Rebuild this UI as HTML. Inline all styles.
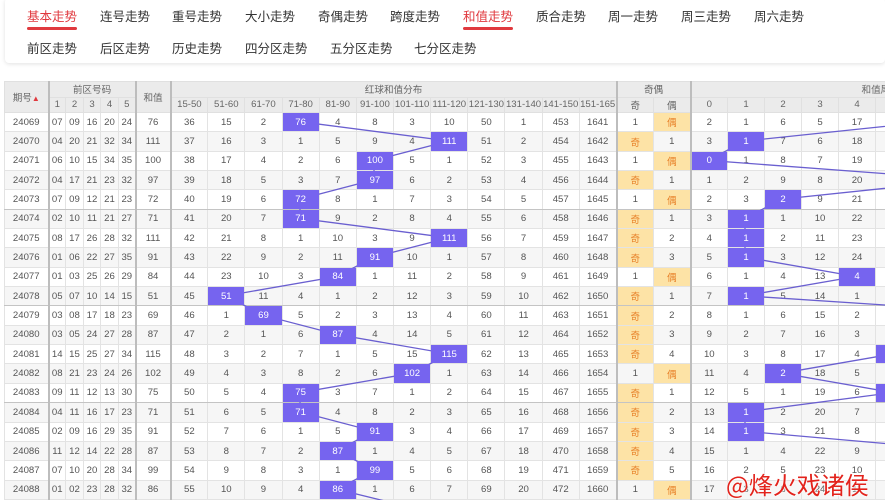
<!DOCTYPE html>
<html><head><meta charset="utf-8"><style>
*{margin:0;padding:0;box-sizing:border-box}
body{width:885px;height:500px;overflow:hidden;background:#fff;font-family:"Liberation Sans","Noto Sans CJK SC",sans-serif;position:relative}
.nav{position:absolute;left:5px;top:-2px;width:880px;height:65px;background:#fff;border-radius:4px;box-shadow:0 1px 4px rgba(0,0,0,.12);overflow:hidden}
.nav span{position:absolute;font-size:12.5px;color:#333;white-space:nowrap}
.nav span.a{color:#e0393e}
.nav span.a:after{content:"";position:absolute;left:0;right:0;bottom:-5px;height:3px;background:#e0393e;border-radius:2px}
.wrap{position:absolute;left:4px;top:81px;width:881px;height:419px;overflow:hidden}
table{border-collapse:collapse;table-layout:fixed;font-size:9.6px;color:#555;width:1052px}
td,th{text-align:center;border:1px solid #e3e3e3;white-space:nowrap;overflow:hidden;padding:0;font-weight:normal}
th{background:#ebebeb;color:#666;height:15.5px;border-color:#e0e0e0}
tr.r td{height:19.35px}
tr.g td{background:#f6f6f6}
tr.sep td{border-bottom:1px solid #c4c4c4}
.s{border-left:2px solid #bdbdbd!important}
td.h{background:#7664ef!important;color:#fff;position:relative;z-index:2}
td.o{background:#fde3a6!important;color:#e8822a}
svg{position:absolute;left:-4px;top:-81px;z-index:1}
.wm{position:absolute;left:726px;top:470px;font-size:24px;color:#e3231c;font-family:"Noto Sans CJK SC",sans-serif;text-shadow:0 0 2px #fff,0 0 2px #fff;white-space:nowrap;line-height:28px;z-index:3}
</style></head><body>
<div class="nav">
<span class="a" style="left:22px;top:8px">基本走势</span>
<span style="left:95px;top:8px">连号走势</span>
<span style="left:167px;top:8px">重号走势</span>
<span style="left:240px;top:8px">大小走势</span>
<span style="left:313px;top:8px">奇偶走势</span>
<span style="left:385px;top:8px">跨度走势</span>
<span class="a" style="left:458px;top:8px">和值走势</span>
<span style="left:531px;top:8px">质合走势</span>
<span style="left:603px;top:8px">周一走势</span>
<span style="left:676px;top:8px">周三走势</span>
<span style="left:749px;top:8px">周六走势</span>
<span style="left:22px;top:40px">前区走势</span>
<span style="left:95px;top:40px">后区走势</span>
<span style="left:167px;top:40px">历史走势</span>
<span style="left:240px;top:40px">四分区走势</span>
<span style="left:325px;top:40px">五分区走势</span>
<span style="left:409px;top:40px">七分区走势</span>
</div>
<div class="wrap">
<svg width="885" height="500" viewBox="0 0 885 500">
<polyline fill="none" stroke="#6a5fd0" stroke-width="1.3" points="300,121.7 449,141 374,160.4 374,179.7 300,199.1 300,218.4 449,237.8 374,257.1 337,276.5 226,295.8 263,315.2 337,334.5 449,353.9 412,373.2 300,392.6 300,411.9 374,431.3 337,450.6 374,470 337,489.3 430,512"/>
<polyline fill="none" stroke="#6a5fd0" stroke-width="1.3" points="930,121.7 745,141 708,160.4 967,179.7 782,199.1 745,218.4 745,237.8 745,257.1 856,276.5 745,295.8 1041,315.2 967,334.5 893,353.9 782,373.2 893,392.6 745,411.9 745,431.3 967,450.6 1041,470 930,489.3"/>
</svg>
<table>
<colgroup><col style="width:44px"><col style="width:17px"><col style="width:18px"><col style="width:17px"><col style="width:18px"><col style="width:17px"><col style="width:35px">
<col style="width:37.17px"><col style="width:37.17px"><col style="width:37.17px"><col style="width:37.17px"><col style="width:37.17px"><col style="width:37.17px"><col style="width:37.17px"><col style="width:37.17px"><col style="width:37.17px"><col style="width:37.17px"><col style="width:37.17px"><col style="width:37.17px">
<col style="width:37px"><col style="width:37px">
<col style="width:37px"><col style="width:37px"><col style="width:37px"><col style="width:37px"><col style="width:37px"><col style="width:37px"><col style="width:37px"><col style="width:37px"><col style="width:37px"><col style="width:37px"></colgroup>
<tr><th rowspan="2">期号<span style="color:#e0393e;font-size:8px">▲</span></th><th colspan="5" class="s">前区号码</th><th rowspan="2" class="s">和值</th><th colspan="12" class="s">红球和值分布</th><th colspan="2" class="s">奇偶</th><th colspan="10" class="s">和值尾</th></tr>
<tr><th class="s">1</th><th>2</th><th>3</th><th>4</th><th>5</th><th class="s">15-50</th><th>51-60</th><th>61-70</th><th>71-80</th><th>81-90</th><th>91-100</th><th>101-110</th><th>111-120</th><th>121-130</th><th>131-140</th><th>141-150</th><th>151-165</th><th class="s">奇</th><th>偶</th><th class="s">0</th><th>1</th><th>2</th><th>3</th><th>4</th><th>5</th><th>6</th><th>7</th><th>8</th><th>9</th></tr>
<tr class="r"><td>24069</td><td class="s">07</td><td>09</td><td>16</td><td>20</td><td>24</td><td class="s">76</td><td class="s">36</td><td>15</td><td>2</td><td class="h">76</td><td>4</td><td>8</td><td>3</td><td>10</td><td>50</td><td>1</td><td>453</td><td>1641</td><td class="s">1</td><td class="o">偶</td><td class="s">2</td><td>1</td><td>6</td><td>5</td><td>17</td><td>18</td><td class="h">6</td><td></td><td></td><td></td></tr>
<tr class="r g"><td>24070</td><td class="s">04</td><td>20</td><td>21</td><td>32</td><td>34</td><td class="s">111</td><td class="s">37</td><td>16</td><td>3</td><td>1</td><td>5</td><td>9</td><td>4</td><td class="h">111</td><td>51</td><td>2</td><td>454</td><td>1642</td><td class="s o">奇</td><td>1</td><td class="s">3</td><td class="h">1</td><td>7</td><td>6</td><td>18</td><td>19</td><td>1</td><td></td><td></td><td></td></tr>
<tr class="r"><td>24071</td><td class="s">06</td><td>10</td><td>15</td><td>34</td><td>35</td><td class="s">100</td><td class="s">38</td><td>17</td><td>4</td><td>2</td><td>6</td><td class="h">100</td><td>5</td><td>1</td><td>52</td><td>3</td><td>455</td><td>1643</td><td class="s">1</td><td class="o">偶</td><td class="s h">0</td><td>1</td><td>8</td><td>7</td><td>19</td><td>20</td><td>2</td><td></td><td></td><td></td></tr>
<tr class="r g"><td>24072</td><td class="s">04</td><td>17</td><td>21</td><td>23</td><td>32</td><td class="s">97</td><td class="s">39</td><td>18</td><td>5</td><td>3</td><td>7</td><td class="h">97</td><td>6</td><td>2</td><td>53</td><td>4</td><td>456</td><td>1644</td><td class="s o">奇</td><td>1</td><td class="s">1</td><td>2</td><td>9</td><td>8</td><td>20</td><td>21</td><td>3</td><td class="h">7</td><td></td><td></td></tr>
<tr class="r sep"><td>24073</td><td class="s">07</td><td>09</td><td>12</td><td>21</td><td>23</td><td class="s">72</td><td class="s">40</td><td>19</td><td>6</td><td class="h">72</td><td>8</td><td>1</td><td>7</td><td>3</td><td>54</td><td>5</td><td>457</td><td>1645</td><td class="s">1</td><td class="o">偶</td><td class="s">2</td><td>3</td><td class="h">2</td><td>9</td><td>21</td><td>22</td><td>4</td><td></td><td></td><td></td></tr>
<tr class="r g"><td>24074</td><td class="s">02</td><td>10</td><td>11</td><td>21</td><td>27</td><td class="s">71</td><td class="s">41</td><td>20</td><td>7</td><td class="h">71</td><td>9</td><td>2</td><td>8</td><td>4</td><td>55</td><td>6</td><td>458</td><td>1646</td><td class="s o">奇</td><td>1</td><td class="s">3</td><td class="h">1</td><td>1</td><td>10</td><td>22</td><td>23</td><td>5</td><td></td><td></td><td></td></tr>
<tr class="r"><td>24075</td><td class="s">08</td><td>17</td><td>26</td><td>28</td><td>32</td><td class="s">111</td><td class="s">42</td><td>21</td><td>8</td><td>1</td><td>10</td><td>3</td><td>9</td><td class="h">111</td><td>56</td><td>7</td><td>459</td><td>1647</td><td class="s o">奇</td><td>2</td><td class="s">4</td><td class="h">1</td><td>2</td><td>11</td><td>23</td><td>24</td><td>6</td><td></td><td></td><td></td></tr>
<tr class="r g"><td>24076</td><td class="s">01</td><td>06</td><td>22</td><td>27</td><td>35</td><td class="s">91</td><td class="s">43</td><td>22</td><td>9</td><td>2</td><td>11</td><td class="h">91</td><td>10</td><td>1</td><td>57</td><td>8</td><td>460</td><td>1648</td><td class="s o">奇</td><td>3</td><td class="s">5</td><td class="h">1</td><td>3</td><td>12</td><td>24</td><td>25</td><td>7</td><td></td><td></td><td></td></tr>
<tr class="r"><td>24077</td><td class="s">01</td><td>03</td><td>25</td><td>26</td><td>29</td><td class="s">84</td><td class="s">44</td><td>23</td><td>10</td><td>3</td><td class="h">84</td><td>1</td><td>11</td><td>2</td><td>58</td><td>9</td><td>461</td><td>1649</td><td class="s">1</td><td class="o">偶</td><td class="s">6</td><td>1</td><td>4</td><td>13</td><td class="h">4</td><td>26</td><td>8</td><td></td><td></td><td></td></tr>
<tr class="r g sep"><td>24078</td><td class="s">05</td><td>07</td><td>10</td><td>14</td><td>15</td><td class="s">51</td><td class="s">45</td><td class="h">51</td><td>11</td><td>4</td><td>1</td><td>2</td><td>12</td><td>3</td><td>59</td><td>10</td><td>462</td><td>1650</td><td class="s o">奇</td><td>1</td><td class="s">7</td><td class="h">1</td><td>5</td><td>14</td><td>1</td><td>27</td><td>9</td><td></td><td></td><td></td></tr>
<tr class="r"><td>24079</td><td class="s">03</td><td>08</td><td>17</td><td>18</td><td>23</td><td class="s">69</td><td class="s">46</td><td>1</td><td class="h">69</td><td>5</td><td>2</td><td>3</td><td>13</td><td>4</td><td>60</td><td>11</td><td>463</td><td>1651</td><td class="s o">奇</td><td>2</td><td class="s">8</td><td>1</td><td>6</td><td>15</td><td>2</td><td>28</td><td>10</td><td></td><td></td><td class="h">9</td></tr>
<tr class="r g"><td>24080</td><td class="s">03</td><td>05</td><td>24</td><td>27</td><td>28</td><td class="s">87</td><td class="s">47</td><td>2</td><td>1</td><td>6</td><td class="h">87</td><td>4</td><td>14</td><td>5</td><td>61</td><td>12</td><td>464</td><td>1652</td><td class="s o">奇</td><td>3</td><td class="s">9</td><td>2</td><td>7</td><td>16</td><td>3</td><td>29</td><td>11</td><td class="h">7</td><td></td><td></td></tr>
<tr class="r"><td>24081</td><td class="s">14</td><td>15</td><td>25</td><td>27</td><td>34</td><td class="s">115</td><td class="s">48</td><td>3</td><td>2</td><td>7</td><td>1</td><td>5</td><td>15</td><td class="h">115</td><td>62</td><td>13</td><td>465</td><td>1653</td><td class="s o">奇</td><td>4</td><td class="s">10</td><td>3</td><td>8</td><td>17</td><td>4</td><td class="h">5</td><td>12</td><td></td><td></td><td></td></tr>
<tr class="r g"><td>24082</td><td class="s">08</td><td>21</td><td>23</td><td>24</td><td>26</td><td class="s">102</td><td class="s">49</td><td>4</td><td>3</td><td>8</td><td>2</td><td>6</td><td class="h">102</td><td>1</td><td>63</td><td>14</td><td>466</td><td>1654</td><td class="s">1</td><td class="o">偶</td><td class="s">11</td><td>4</td><td class="h">2</td><td>18</td><td>5</td><td>1</td><td>13</td><td></td><td></td><td></td></tr>
<tr class="r sep"><td>24083</td><td class="s">09</td><td>11</td><td>12</td><td>13</td><td>30</td><td class="s">75</td><td class="s">50</td><td>5</td><td>4</td><td class="h">75</td><td>3</td><td>7</td><td>1</td><td>2</td><td>64</td><td>15</td><td>467</td><td>1655</td><td class="s o">奇</td><td>1</td><td class="s">12</td><td>5</td><td>1</td><td>19</td><td>6</td><td class="h">5</td><td>14</td><td></td><td></td><td></td></tr>
<tr class="r g"><td>24084</td><td class="s">04</td><td>11</td><td>16</td><td>17</td><td>23</td><td class="s">71</td><td class="s">51</td><td>6</td><td>5</td><td class="h">71</td><td>4</td><td>8</td><td>2</td><td>3</td><td>65</td><td>16</td><td>468</td><td>1656</td><td class="s o">奇</td><td>2</td><td class="s">13</td><td class="h">1</td><td>2</td><td>20</td><td>7</td><td>1</td><td>15</td><td></td><td></td><td></td></tr>
<tr class="r"><td>24085</td><td class="s">02</td><td>09</td><td>16</td><td>29</td><td>35</td><td class="s">91</td><td class="s">52</td><td>7</td><td>6</td><td>1</td><td>5</td><td class="h">91</td><td>3</td><td>4</td><td>66</td><td>17</td><td>469</td><td>1657</td><td class="s o">奇</td><td>3</td><td class="s">14</td><td class="h">1</td><td>3</td><td>21</td><td>8</td><td>2</td><td>16</td><td></td><td></td><td></td></tr>
<tr class="r g"><td>24086</td><td class="s">11</td><td>12</td><td>14</td><td>22</td><td>28</td><td class="s">87</td><td class="s">53</td><td>8</td><td>7</td><td>2</td><td class="h">87</td><td>1</td><td>4</td><td>5</td><td>67</td><td>18</td><td>470</td><td>1658</td><td class="s o">奇</td><td>4</td><td class="s">15</td><td>1</td><td>4</td><td>22</td><td>9</td><td>3</td><td>17</td><td class="h">7</td><td></td><td></td></tr>
<tr class="r"><td>24087</td><td class="s">07</td><td>10</td><td>20</td><td>28</td><td>34</td><td class="s">99</td><td class="s">54</td><td>9</td><td>8</td><td>3</td><td>1</td><td class="h">99</td><td>5</td><td>6</td><td>68</td><td>19</td><td>471</td><td>1659</td><td class="s o">奇</td><td>5</td><td class="s">16</td><td>2</td><td>5</td><td>23</td><td>10</td><td>4</td><td>18</td><td></td><td></td><td class="h">9</td></tr>
<tr class="r g"><td>24088</td><td class="s">01</td><td>02</td><td>23</td><td>28</td><td>32</td><td class="s">86</td><td class="s">55</td><td>10</td><td>9</td><td>4</td><td class="h">86</td><td>1</td><td>6</td><td>7</td><td>69</td><td>20</td><td>472</td><td>1660</td><td class="s">1</td><td class="o">偶</td><td class="s">17</td><td>3</td><td>6</td><td>24</td><td>11</td><td>5</td><td class="h">6</td><td></td><td></td><td></td></tr>
</table>
</div>
<div class="wm">@烽火戏诸侯</div>
</body></html>
